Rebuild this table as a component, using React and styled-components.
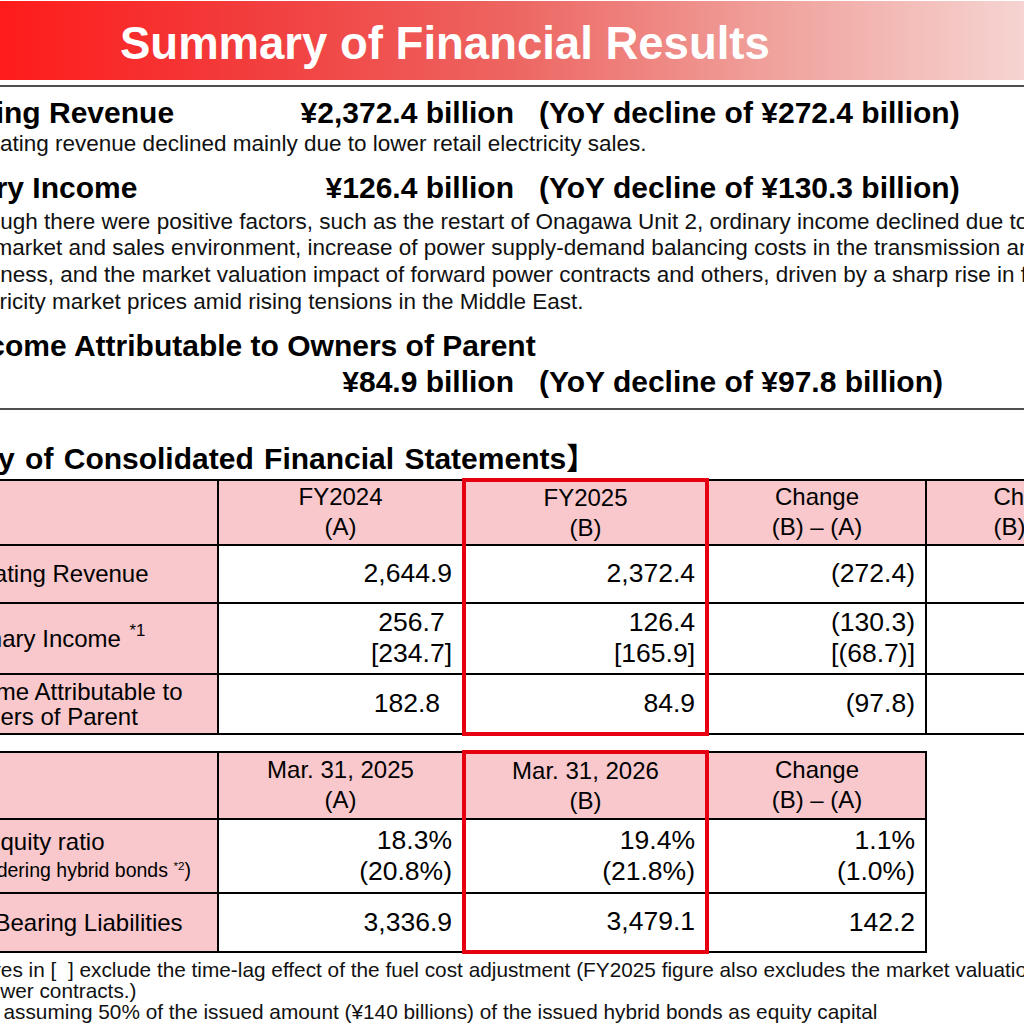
import React from "react";
import styled, { createGlobalStyle } from "styled-components";

const GlobalStyle = createGlobalStyle`
  html, body {
    margin: 0;
    padding: 0;
    background: #ffffff;
  }
  body {
    width: 1024px;
    height: 1024px;
    overflow: hidden;
  }
  #root {
    width: 1024px;
    height: 1024px;
    overflow: hidden;
  }
`;

const Viewport = styled.div`
  width: 1024px;
  height: 1024px;
  overflow: hidden;
  font-family: "Liberation Sans", Arial, sans-serif;
  color: #000;
`;

// the slide is wider than the window, its left edge sits off screen
const Slide = styled.div`
  width: 1290px;
  margin-left: -130px;
`;

const TitleBar = styled.header`
  margin-top: 1px;
  height: 79px;
  box-sizing: border-box;
  padding: 17px 0 0 250px;
  background: linear-gradient(
    to right,
    #ff1414 0px,
    #ff1b1b 130px,
    #f23d3d 380px,
    #ed6561 640px,
    #f0a19c 900px,
    #f6d4d1 1154px,
    #f8dedc 1290px
  );
`;

const Title = styled.h1`
  margin: 0;
  font-size: 45.5px;
  line-height: 52px;
  font-weight: 700;
  color: #ffffff;
  white-space: nowrap;
`;

const Rule = styled.hr`
  margin: ${(p) => p.$top}px 0 0 0;
  height: 2px;
  border: none;
  background: #4f4f4f;
`;

const Summary = styled.section`
  padding-left: 35px;
  white-space: nowrap;
`;

const HeadRow = styled.div`
  display: grid;
  grid-template-columns: 390px 219px auto;
  margin-top: ${(p) => p.$top || 0}px;
  font-size: 30px;
  font-weight: 700;
  line-height: 36px;
`;

const HeadLabel = styled.div`
  grid-column: ${(p) => (p.$wide ? "1 / 4" : "1")};
  margin-left: ${(p) => p.$shift || 0}px;
`;

const Amount = styled.div`
  grid-column: 2;
  text-align: right;
`;

const Yoy = styled.div`
  grid-column: 3;
  padding-left: 25px;
`;

const Para = styled.div`
  margin-top: ${(p) => p.$top || 0}px;
  font-size: 22.5px;
  line-height: 26.7px;
  color: #111;
`;

const ParaLine = styled.div`
  padding-left: ${(p) => p.$indent}px;
`;

const SectionTitle = styled.h2`
  margin: 32px 0 0 -22px;
  font-size: 30px;
  line-height: 34px;
  font-weight: 700;
  word-spacing: 2px;
  white-space: nowrap;
  font-family: "Liberation Sans", "Noto Sans CJK JP", sans-serif;
`;

const Table = styled.table`
  border-collapse: collapse;
  table-layout: fixed;
  width: ${(p) => p.$width}px;
  margin-top: ${(p) => p.$top}px;
  white-space: nowrap;
`;

const Row = styled.tr`
  height: ${(p) => p.$h}px;
`;

const boxEdges = (p) =>
  p.$box
    ? `
  border-left: 4px solid #e60012;
  border-right: 4px solid #e60012;
  ${p.$boxTop ? "border-top: 4px solid #e60012;" : ""}
  ${p.$boxBottom ? "border-bottom: 4px solid #e60012;" : ""}
`
    : "";

const HeadCell = styled.th`
  padding: 0;
  border: 2px solid #000;
  background: #f8c8cc;
  font-size: 24px;
  line-height: 30px;
  font-weight: 400;
  text-align: center;
  vertical-align: middle;
  ${boxEdges}
`;

const LabelCell = styled.td`
  padding: 0;
  border: 2px solid #000;
  background: #f8c8cc;
  font-size: 24px;
  line-height: 25px;
  text-align: center;
  vertical-align: middle;
`;

const LabelLine = styled.div`
  line-height: 30px;
`;

const Small = styled.div`
  font-size: 19.5px;
  line-height: 27px;
`;

const NumCell = styled.td`
  padding: 0 ${(p) => p.$pad || 10}px 0 0;
  border: 2px solid #000;
  background: #ffffff;
  font-size: 26.5px;
  line-height: 31px;
  text-align: right;
  vertical-align: middle;
  ${boxEdges}
`;

const Sup = styled.sup`
  font-size: ${(p) => p.$size || 0.7}em;
  line-height: 0;
  vertical-align: 0.6em;
  margin-left: ${(p) => p.$gap || 0}px;
`;

const Notes = styled.div`
  margin-top: 5px;
  font-size: 20.8px;
  line-height: 21px;
  white-space: nowrap;
  color: #111;
`;

const cols1 = [347, 246, 243, 219, 219];
const cols2 = [347, 246, 243, 219];

const plRows = [
  {
    label: "Operating Revenue",
    h: 58,
    a: ["2,644.9"],
    b: ["2,372.4"],
    c: ["(272.4)"],
    d: ["(10.3%)"],
  },
  {
    label: (
      <>
        Ordinary Income <Sup $gap={2}>*1</Sup>
      </>
    ),
    h: 71,
    a: ["256.7\u00a0", "[234.7]"],
    b: ["126.4", "[165.9]"],
    c: ["(130.3)", "[(68.7)]"],
    d: ["(50.8%)", "[(29.3%)]"],
  },
  {
    label: (
      <>
        Net Income Attributable to
        <br />
        Owners of Parent
      </>
    ),
    h: 60,
    a: ["182.8"],
    aPad: 22,
    b: ["84.9"],
    c: ["(97.8)"],
    d: ["(53.5%)"],
  },
];

const bsRows = [
  {
    label: (
      <>
        <LabelLine>Equity ratio</LabelLine>
        <Small>
          (After considering hybrid bonds <Sup $size={0.6}>*2</Sup>)
        </Small>
      </>
    ),
    h: 74,
    a: ["18.3%", "(20.8%)"],
    b: ["19.4%", "(21.8%)"],
    c: ["1.1%", "(1.0%)"],
  },
  {
    label: "Interest-Bearing Liabilities",
    h: 59,
    a: ["3,336.9"],
    b: ["3,479.1"],
    c: ["142.2"],
  },
];

const Lines = ({ items }) =>
  items.map((t, i) => <div key={i}>{t}</div>);

const App = () => {
  return (
    <Viewport>
      <GlobalStyle />
      <Slide>
        <TitleBar>
          <Title>Summary of Financial Results</Title>
        </TitleBar>
        <Rule $top={5} />

        <Summary>
          <HeadRow $top={8}>
            <HeadLabel $shift={-6}>Operating Revenue</HeadLabel>
            <Amount>¥2,372.4 billion</Amount>
            <Yoy>(YoY decline of ¥272.4 billion)</Yoy>
          </HeadRow>
          <Para>
            <ParaLine $indent={45}>
              Operating revenue declined mainly due to lower retail electricity sales.
            </ParaLine>
          </Para>

          <HeadRow $top={12}>
            <HeadLabel $shift={-6}>Ordinary Income</HeadLabel>
            <Amount>¥126.4 billion</Amount>
            <Yoy>(YoY decline of ¥130.3 billion)</Yoy>
          </HeadRow>
          <Para $top={3}>
            <ParaLine $indent={44}>
              Although there were positive factors, such as the restart of Onagawa Unit 2, ordinary income declined due to the
            </ParaLine>
            <ParaLine $indent={51}>
              the market and sales environment, increase of power supply-demand balancing costs in the transmission and distribution
            </ParaLine>
            <ParaLine $indent={54}>
              business, and the market valuation impact of forward power contracts and others, driven by a sharp rise in fuel and
            </ParaLine>
            <ParaLine $indent={47}>
              electricity market prices amid rising tensions in the Middle East.
            </ParaLine>
          </Para>

          <HeadRow $top={12}>
            <HeadLabel $wide>Net Income Attributable to Owners of Parent</HeadLabel>
            <Amount>¥84.9 billion</Amount>
            <Yoy>(YoY decline of ¥97.8 billion)</Yoy>
          </HeadRow>
        </Summary>
        <Rule $top={8} />

        <SectionTitle>【Summary of Consolidated Financial Statements】</SectionTitle>

        <Table $width={1274} $top={2}>
          <colgroup>
            {cols1.map((w, i) => (
              <col key={i} style={{ width: w }} />
            ))}
          </colgroup>
          <thead>
            <Row $h={65}>
              <HeadCell />
              <HeadCell>
                FY2024
                <br />
                (A)
              </HeadCell>
              <HeadCell $box $boxTop>
                FY2025
                <br />
                (B)
              </HeadCell>
              <HeadCell>
                Change
                <br />
                (B) – (A)
              </HeadCell>
              <HeadCell>
                Change
                <br />
                (B) / (A)
              </HeadCell>
            </Row>
          </thead>
          <tbody>
            {plRows.map((r, i) => (
              <Row key={i} $h={r.h}>
                <LabelCell>{r.label}</LabelCell>
                <NumCell $pad={r.aPad}>
                  <Lines items={r.a} />
                </NumCell>
                <NumCell $box $boxBottom={i === plRows.length - 1}>
                  <Lines items={r.b} />
                </NumCell>
                <NumCell>
                  <Lines items={r.c} />
                </NumCell>
                <NumCell>
                  <Lines items={r.d} />
                </NumCell>
              </Row>
            ))}
          </tbody>
        </Table>

        <Table $width={1055} $top={14}>
          <colgroup>
            {cols2.map((w, i) => (
              <col key={i} style={{ width: w }} />
            ))}
          </colgroup>
          <thead>
            <Row $h={67}>
              <HeadCell />
              <HeadCell>
                Mar. 31, 2025
                <br />
                (A)
              </HeadCell>
              <HeadCell $box $boxTop>
                Mar. 31, 2026
                <br />
                (B)
              </HeadCell>
              <HeadCell>
                Change
                <br />
                (B) – (A)
              </HeadCell>
            </Row>
          </thead>
          <tbody>
            {bsRows.map((r, i) => (
              <Row key={i} $h={r.h}>
                <LabelCell>{r.label}</LabelCell>
                <NumCell>
                  <Lines items={r.a} />
                </NumCell>
                <NumCell $box $boxBottom={i === bsRows.length - 1}>
                  <Lines items={r.b} />
                </NumCell>
                <NumCell>
                  <Lines items={r.c} />
                </NumCell>
              </Row>
            ))}
          </tbody>
        </Table>

        <Notes>
          <ParaLine $indent={58}>
            *1 Figures in [{"\u00a0\u00a0"}] exclude the time-lag effect of the fuel cost adjustment (FY2025 figure also excludes the market valuation impact of forward
          </ParaLine>
          <ParaLine $indent={107}>power contracts.)</ParaLine>
          <ParaLine $indent={4}>
            *2 Calculated assuming 50% of the issued amount (¥140 billions) of the issued hybrid bonds as equity capital
          </ParaLine>
        </Notes>
      </Slide>
    </Viewport>
  );
};

export default App;
